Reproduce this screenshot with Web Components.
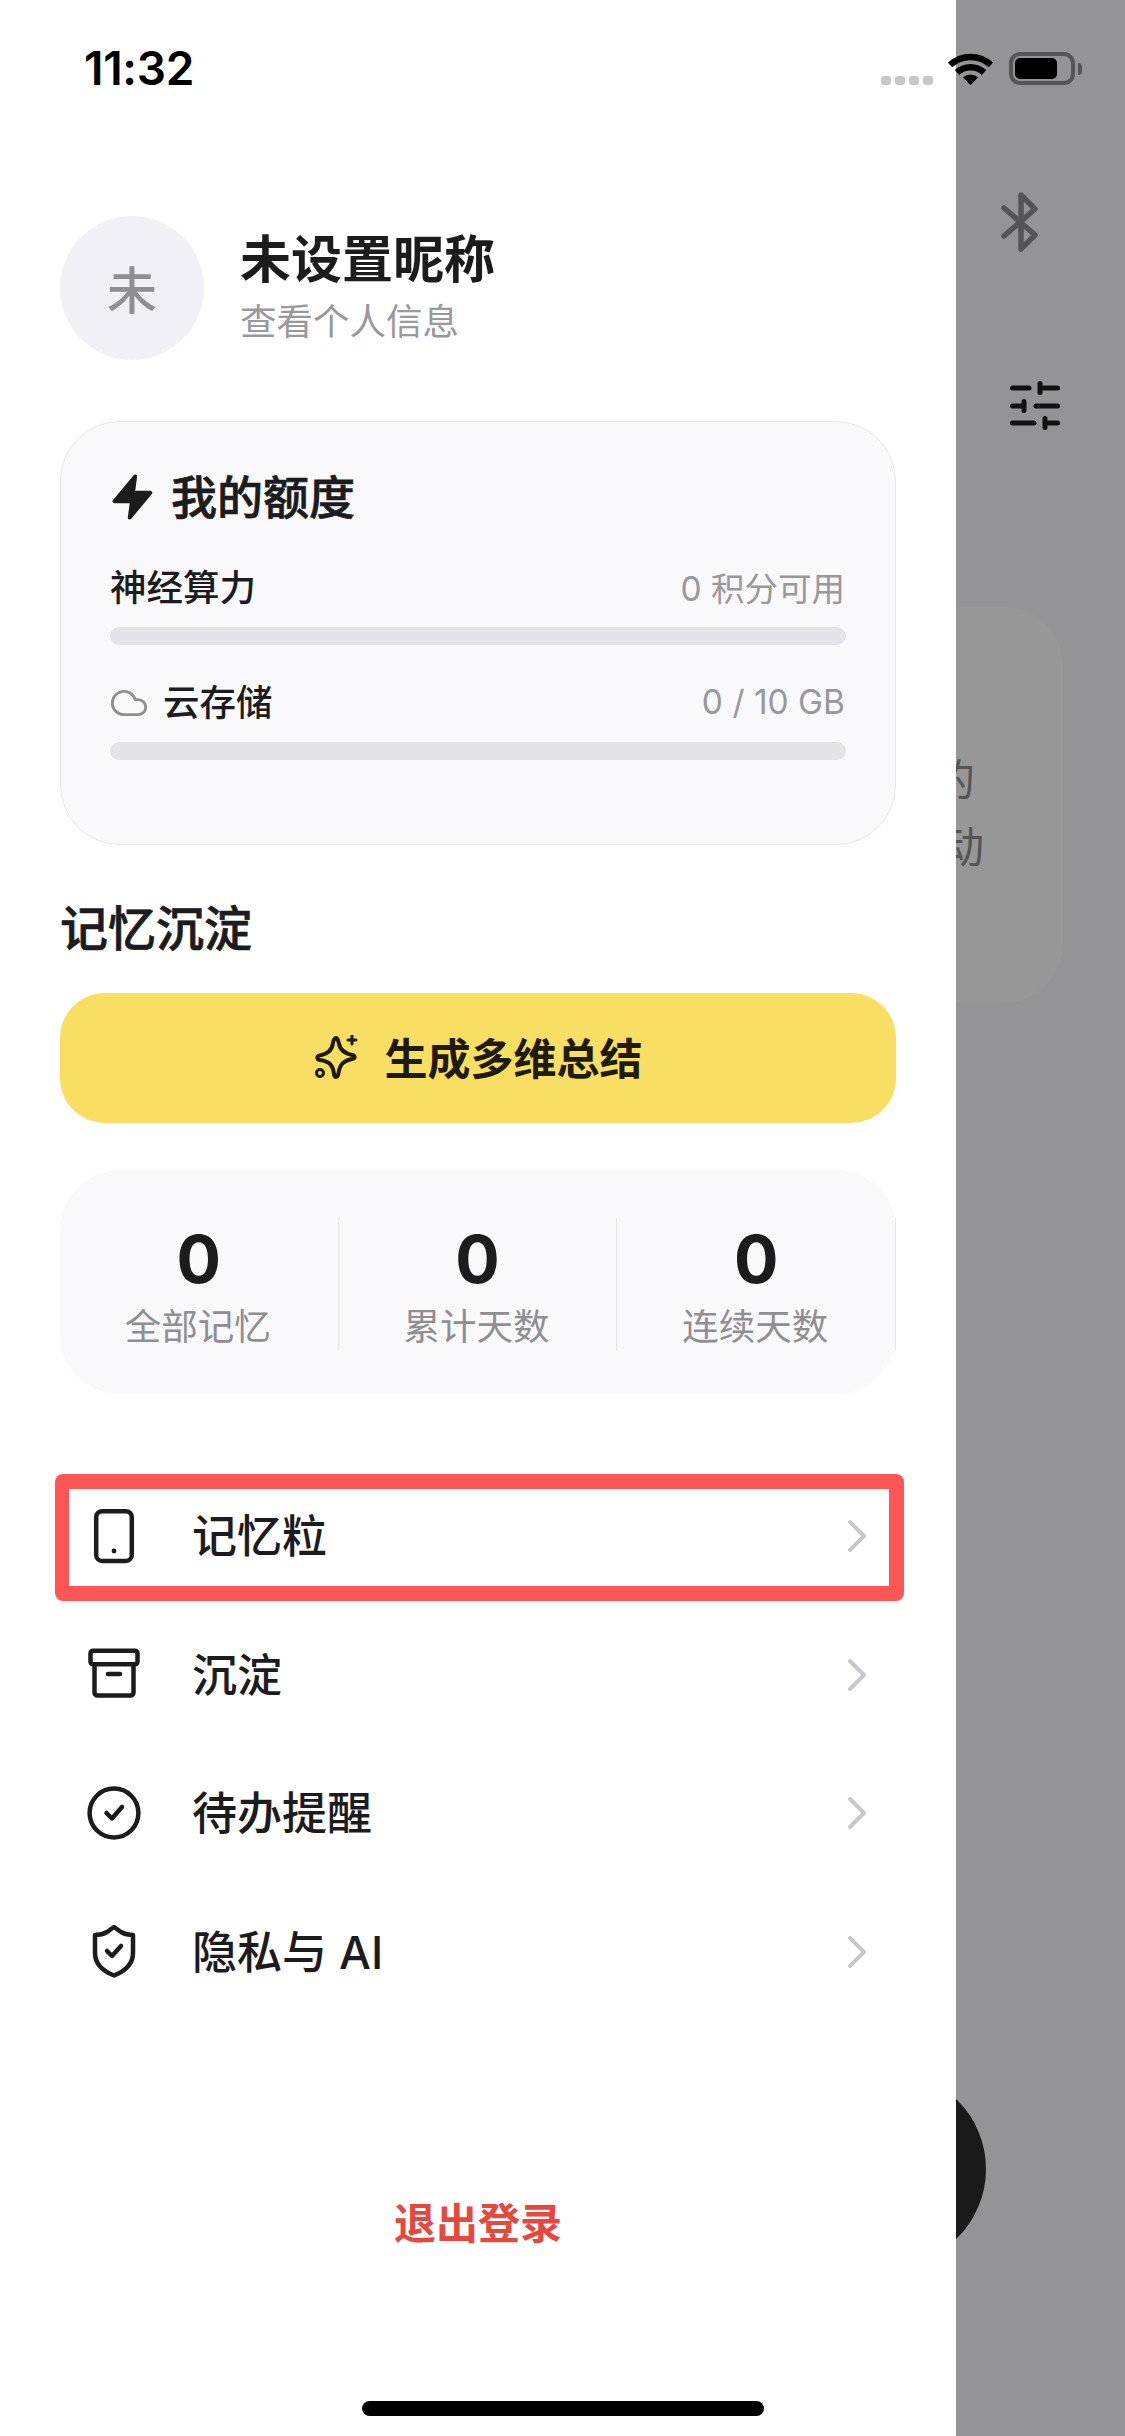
<!DOCTYPE html>
<html lang="zh-CN">
<head>
<meta charset="utf-8">
<title>记忆沉淀</title>
<style>
  html, body { margin: 0; padding: 0; background: #949496; }
  body { font-family: Inter, "Noto Sans CJK SC", sans-serif; color: #1c1c1e; }
</style>
</head>
<body>
<x-app>
  <x-backdrop></x-backdrop>
  <x-drawer>
    <x-profile name="未设置昵称" sub="查看个人信息" initial="未"></x-profile>
    <x-quota>
      <x-meter label="神经算力" value="0 积分可用"></x-meter>
      <x-meter label="云存储" value="0 / 10 GB" cloud></x-meter>
    </x-quota>
    <x-section-title>记忆沉淀</x-section-title>
    <x-action-button>生成多维总结</x-action-button>
    <x-stats>
      <x-stat value="0" label="全部记忆"></x-stat>
      <x-stat value="0" label="累计天数"></x-stat>
      <x-stat value="0" label="连续天数"></x-stat>
    </x-stats>
    <x-menu>
      <x-menu-row icon="phone" highlight>记忆粒</x-menu-row>
      <x-menu-row icon="archive">沉淀</x-menu-row>
      <x-menu-row icon="check">待办提醒</x-menu-row>
      <x-menu-row icon="shield">隐私与 AI</x-menu-row>
    </x-menu>
    <x-logout>退出登录</x-logout>
    <x-home-bar></x-home-bar>
  </x-drawer>
  <x-status-bar></x-status-bar>
</x-app>
<script>
function define(name, css, html, setup) {
  customElements.define(name, class extends HTMLElement {
    constructor() {
      super();
      const root = this.attachShadow({ mode: 'open' });
      const t = document.createElement('template');
      t.innerHTML = '<style>' + css + '</style>' + (typeof html === 'function' ? html(this) : html);
      root.appendChild(t.content.cloneNode(true));
    }
    connectedCallback() {
      if (this._done) return;
      this._done = true;
      const root = this.shadowRoot;
      root.querySelectorAll('[data-attr]').forEach(n => { n.textContent = this.getAttribute(n.dataset.attr) || ''; });
      if (setup) setup(this, root);
    }
  });
}

define('x-app', `
  :host { display: block; position: relative; width: 1125px; height: 2436px; overflow: hidden; background: #949496; }
`, `<slot></slot>`);

define('x-backdrop', `
  :host { display: flex; flex-direction: column; align-items: flex-end; height: 100%; box-sizing: border-box; padding-top: 189px; position: relative; }
  .bt { width: 44px; height: 66px; margin-right: 83px; display: block; }
  .sl { width: 60px; height: 60px; margin-right: 60px; margin-top: 126px; display: block; }
  .card { width: 900px; height: 396px; margin-top: 166px; margin-right: 62px; background: #979797; border-radius: 60px; box-sizing: border-box; padding-top: 137px;
    display: flex; flex-direction: column; align-items: flex-end; color: #555557; font-size: 43px; line-height: 67px; font-family: "Noto Sans CJK SC", sans-serif; }
  .a { margin-right: 88px; } .b { margin-right: 79px; }
  .fab { position: absolute; left: 792px; top: 2072px; width: 194px; height: 194px; border-radius: 50%; background: #1a1a1a; }
`, `
  <svg class="bt" viewBox="0 0 44 66" fill="none" stroke="#555557" stroke-width="5.500" stroke-linecap="round" stroke-linejoin="round"><path d="M6 19L37 46L23 60V6L37 20L6 47"/></svg>
  <svg class="sl" viewBox="0 0 60 60" fill="none" stroke="#111" stroke-width="5" stroke-linecap="round"><path d="M7.500 7H24M35 7H52.500M35 2.500V11.500M7.500 25H19M31 25H52.500M19 20.500V29.500M7.500 42H29M40 42H52.500M40 37.500V46.500"/></svg>
  <div class="card"><div class="a">的</div><div class="b">动</div></div>
  <div class="fab"></div>
`);

define('x-drawer', `
  :host { position: absolute; left: 0; top: 0; bottom: 0; width: 956px; background: #fff; box-sizing: border-box; padding: 216px 60px 0; display: flex; flex-direction: column; }
`, `<slot></slot>`);

define('x-status-bar', `
  :host { position: absolute; left: 0; top: 0; width: 1125px; height: 100px; display: block; pointer-events: none; }
  .row { display: flex; align-items: flex-start; height: 100%; box-sizing: border-box; padding: 41px 43px 0 84px; }
  .time { font: 600 46px/54px Inter, sans-serif; color: #000; letter-spacing: -0.3px; flex: 1; }
  .dots { display: flex; gap: 4px; margin-top: 35px; margin-right: 15px; }
  .dots i { width: 10px; height: 9px; border-radius: 3px; background: #c8c8ca; }
  .wifi { width: 45px; height: 33px; margin-top: 11px; margin-right: 16px; display: block; }
  .bat { display: flex; align-items: center; margin-top: 11px; }
  .shell { width: 66px; height: 33px; box-sizing: border-box; border: 4px solid #555557; border-radius: 11px; padding: 2px; }
  .fill { width: 42px; height: 100%; background: #000; border-radius: 5px; }
  .cap { width: 4px; height: 12px; margin-left: 3px; background: #555557; border-radius: 0 4px 4px 0; }
`, `
  <div class="row">
    <div class="time">11:32</div>
    <div class="dots"><i></i><i></i><i></i><i></i></div>
    <svg class="wifi" viewBox="0 0 45 33"><g fill="none" stroke="#000" stroke-width="6.500"><path d="M2 13A30 30 0 0 1 43 13"/><path d="M9 20.500A20 20 0 0 1 36 20.500"/></g><path d="M22.500 33L15 25.500A11 11 0 0 1 30 25.500Z" fill="#000"/></svg>
    <div class="bat"><div class="shell"><div class="fill"></div></div><div class="cap"></div></div>
  </div>
`);

define('x-profile', `
  :host { display: flex; align-items: center; height: 144px; }
  .av { width: 144px; height: 144px; border-radius: 50%; background: #f1f1f5; color: #8e8e93; font-size: 50px; font-weight: 500; padding-bottom: 2px; box-sizing: border-box; display: flex; align-items: center; justify-content: center; flex: none; font-family: "Noto Sans CJK SC", sans-serif; }
  .t { margin-left: 36px; display: flex; flex-direction: column; }
  .n { font-size: 51px; line-height: 62px; font-weight: 600; color: #1c1c1e; margin-top: -2px; }
  .s { font-size: 36.500px; line-height: 48px; color: #98989d; margin-top: 7px; }
`, `
  <div class="av" data-attr="initial"></div>
  <div class="t"><div class="n" data-attr="name"></div><div class="s" data-attr="sub"></div></div>
`);

define('x-quota', `
  :host { display: block; margin-top: 61px; box-sizing: border-box; height: 424px; padding: 49px 49px 0; background: #f9f9fb; border: 1px solid #e8e8ec; border-radius: 60px; }
  .h { display: flex; align-items: center; height: 52px; margin-bottom: 40px; font-size: 46px; font-weight: 500; -webkit-text-stroke: 0.7px #1c1c1e; }
  .h span { padding-bottom: 6px; }
  svg { width: 52px; height: 52px; margin-left: -3px; margin-right: 12px; display: block; }
`, `
  <div class="h"><svg viewBox="0 0 24 24" fill="#1c1c1e" stroke="#1c1c1e" stroke-width="1.800" stroke-linejoin="round"><path d="M13 2.500L3.500 14h8l-1 7.500L20 10h-8l1-7.500z"/></svg><span>我的额度</span></div>
  <slot></slot>
`);

define('x-meter', `
  :host { display: block; margin-bottom: 33px; }
  .r { display: flex; align-items: center; height: 50px; margin-bottom: 14px; }
  .l { font-size: 36.500px; font-weight: 500; color: #1c1c1e; flex: 1; display: flex; align-items: center; }
  .l span { padding-bottom: 5px; }
  .v { font-size: 33.500px; color: #98989d; margin-right: 1px; padding-bottom: 3px; }
  svg { width: 40px; height: 40px; margin-left: -1px; margin-right: 14px; display: none; }
  :host([cloud]) svg { display: block; }
  .bar { height: 18px; border-radius: 9px; background: #e4e4e8; }
`, `
  <div class="r"><div class="l"><svg viewBox="0 0 24 24" fill="none" stroke="#8e8e93" stroke-width="1.700" stroke-linecap="round" stroke-linejoin="round"><path d="M17.500 19H9a7 7 0 1 1 6.710-9h1.790a4.500 4.500 0 1 1 0 9Z"/></svg><span data-attr="label"></span></div><div class="v" data-attr="value"></div></div>
  <div class="bar"></div>
`);

define('x-section-title', `
  :host { display: block; margin-top: 54px; font-size: 48px; line-height: 60px; font-weight: 500; -webkit-text-stroke: 0.7px #1c1c1e; color: #1c1c1e; }
`, `<slot></slot>`);

define('x-action-button', `
  :host { display: flex; align-items: center; justify-content: center; margin-top: 34px; height: 130px; background: #f8df63; border-radius: 45px; font-size: 43px; font-weight: 600; color: #1f1a0c; }
  svg { width: 46px; height: 46px; margin-right: 25px; display: block; }
  span { padding-bottom: 5px; }
`, `
  <svg viewBox="0 0 46 46" fill="none" stroke="#1f1a0c" stroke-width="4" stroke-linecap="round" stroke-linejoin="round">
    <path d="M22 3C23.500 3 24.500 6 25 9C26 14 29 18 38 20C41.500 20.800 41.500 23.500 38 24C30 25.500 26 29 24.500 38C24 42.500 20.500 43.500 20 39C19 31 16.500 26.500 6 25C2.500 24.400 2.500 21 6 20.400C14 19 18 15 19 8C19.500 5 20.500 3 22 3Z"/>
    <path d="M38 1V9M34 5H42" stroke-width="3"/><circle cx="6" cy="38" r="3.500" stroke-width="3"/>
  </svg>
  <span><slot></slot></span>
`);

define('x-stats', `
  :host { display: grid; grid-template-columns: repeat(3, 1fr); margin-top: 47px; height: 224px; box-sizing: border-box; padding: 48px 0 47px; background: #f9f9fb; border-radius: 60px; }
`, `<slot></slot>`);

define('x-stat', `
  :host { display: flex; flex-direction: column; align-items: center; border-right: 1px solid #e6e6ea; }
  .v { font-size: 66px; line-height: 82px; font-weight: 700; color: #1c1c1e; }
  .l { font-size: 36.500px; line-height: 47px; color: #8e8e93; margin-top: 4px; margin-right: 2px; }
`, `<div class="v" data-attr="value"></div><div class="l" data-attr="label"></div>`);

define('x-menu', `
  :host { display: block; margin-top: 73px; }
`, `<slot></slot>`);

const ICONS = {
  phone: '<rect x="12.200" y="5.200" width="35.600" height="49.800" rx="6"/><circle cx="30" cy="45" r="2.400" fill="#1c1c1e" stroke="none"/>',
  archive: '<rect x="6.500" y="5.700" width="47" height="13.600" rx="2.500"/><path d="M10.500 19.300V47.500a3 3 0 0 0 3 3H46.500a3 3 0 0 0 3-3V19.300"/><path d="M24 29H36"/>',
  check: '<circle cx="30" cy="30" r="24.400"/><path d="M22.500 30L28 35.500L38 24"/>',
  shield: '<path d="M30 5L37 10Q42 13 49 13V31Q49 46 30 53.500Q11 46 11 31V13Q18 13 23 10Z"/><path d="M23 29L28 34L37 24"/>'
};

define('x-menu-row', `
  :host { display: flex; align-items: center; height: 138.500px; position: relative; font-size: 45px; font-weight: 500; color: #1c1c1e; }
  .i { width: 107px; height: 60px; display: flex; justify-content: center; flex: none; }
  .i svg { width: 60px; height: 60px; display: block; }
  .t { margin-left: 25px; flex: 1; padding-bottom: 5px; }
  .c { width: 24px; height: 36px; margin-right: 27px; display: block; }
  :host([highlight])::after { content: ""; position: absolute; left: -5px; right: -8px; top: 7px; height: 127px; box-sizing: border-box; border: 14px solid #ff5555; border-right-width: 15px; border-top-width: 15px; border-bottom-width: 15px; border-radius: 8px; pointer-events: none; }
`, host => `
  <div class="i"><svg viewBox="0 0 60 60" fill="none" stroke="#1c1c1e" stroke-width="4.500" stroke-linecap="round" stroke-linejoin="round">${ICONS[host.getAttribute('icon')] || ''}</svg></div>
  <div class="t"><slot></slot></div>
  <svg class="c" viewBox="0 0 24 36" fill="none" stroke="#c7c7cc" stroke-width="4" stroke-linecap="round" stroke-linejoin="round"><path d="M5 4L19 18L5 32"/></svg>
`);

define('x-logout', `
  :host { display: block; margin-top: 173px; text-align: center; font-size: 42px; line-height: 60px; font-weight: 600; color: #e5483f; }
`, `<slot></slot>`);

define('x-home-bar', `
  :host { position: absolute; left: 362px; top: 2401px; width: 402px; height: 15px; background: #000; border-radius: 8px; display: block; }
`, ``);
</script>
</body>
</html>
